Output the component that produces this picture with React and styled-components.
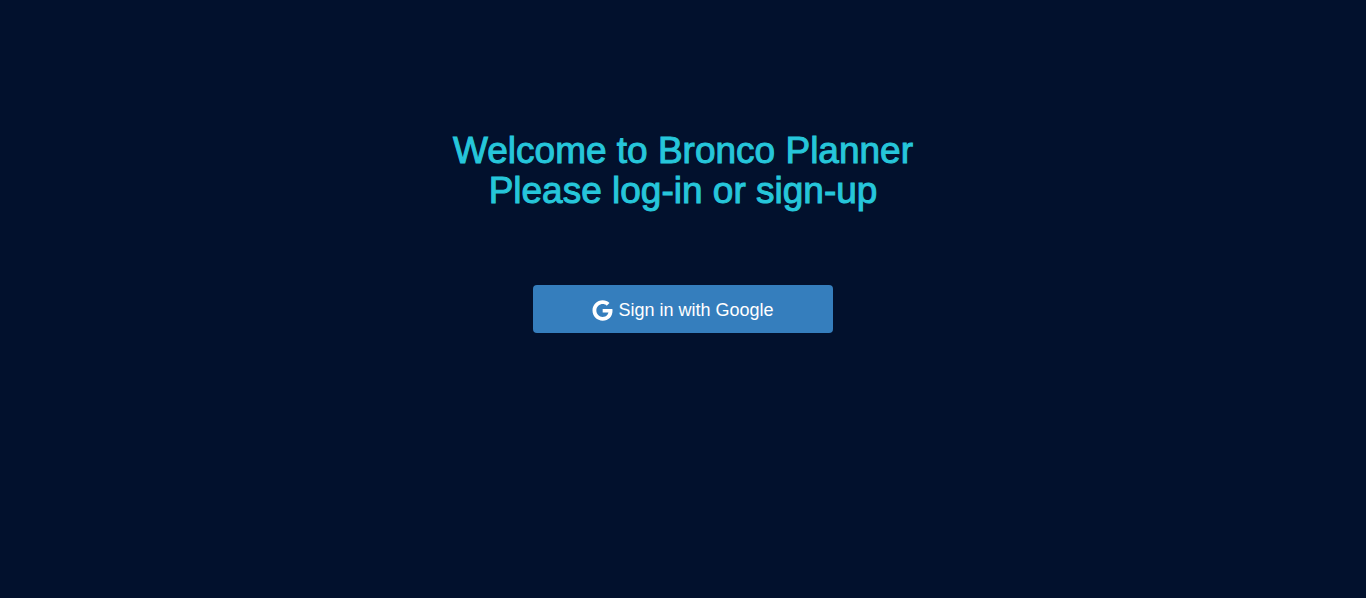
import React from "react";
import styled, { createGlobalStyle } from "styled-components";
import { FaGoogle } from "react-icons/fa";

const GlobalStyle = createGlobalStyle`
  *, *::before, *::after { box-sizing: border-box; }
  body {
    margin: 0;
    background: #02112d;
    font-family: "Liberation Sans", Helvetica, Arial, sans-serif;
  }
`;

const Page = styled.main`
  display: flex;
  flex-direction: column;
  align-items: center;
  gap: 74px;
  min-height: 100vh;
  padding: 131px 16px 32px;
`;

const Title = styled.h1`
  margin: 0;
  color: #26c6da;
  font-size: 37px;
  font-weight: 500;
  line-height: 40px;
  text-align: center;
  -webkit-text-stroke: 1px currentColor;
`;

const SignInButton = styled.button`
  display: flex;
  align-items: center;
  justify-content: center;
  gap: 5px;
  width: 100%;
  max-width: 300px;
  padding: 13px 16px 11px;
  border: 0;
  border-radius: 4px;
  background: #357ebd;
  color: #fff;
  font-family: inherit;
  font-size: 18px;
  line-height: 24px;
  cursor: pointer;
`;

export default function App() {
  return (
    <>
      <GlobalStyle />
      <Page>
        <Title>
          Welcome to Bronco Planner
          <br />
          Please log-in or sign-up
        </Title>
        <SignInButton type="button">
          <FaGoogle size={21} aria-hidden="true" />
          Sign in with Google
        </SignInButton>
      </Page>
    </>
  );
}
